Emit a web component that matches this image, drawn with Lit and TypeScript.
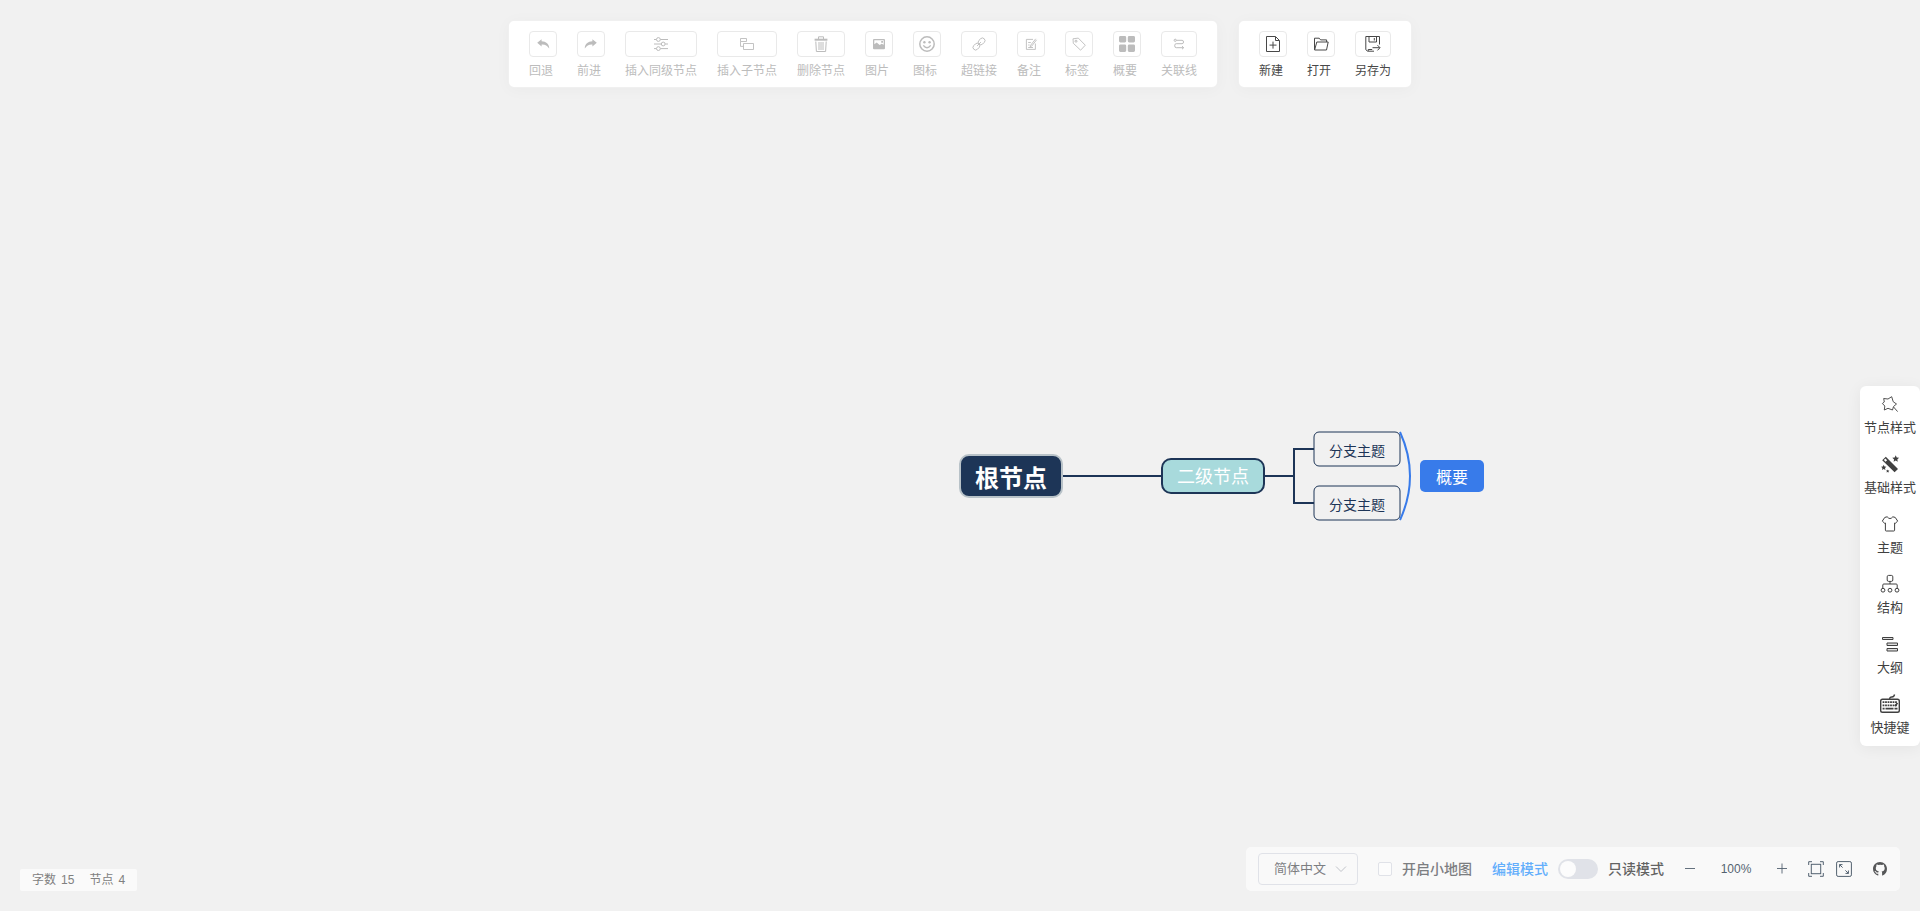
import { LitElement, html, svg, css } from "lit";
import type { TemplateResult, SVGTemplateResult } from "lit";
import { customElement, property, state } from "lit/decorators.js";

const ICONS: Record<string, SVGTemplateResult> = {
  back: svg`<path class="solid" d="M6.6 3.2 2.2 6.8l4.400 3.700V8.400c3.600-.2 5.500.9 7.600 4 .1-4.300-3.200-6.900-7.600-7.100z"/>`,
  forward: svg`<path class="solid" d="M9.400 3.200 13.800 6.800 9.400 10.500V8.400c-3.600-.2-5.500.9-7.600 4-.1-4.300 3.200-6.900 7.600-7.100z"/>`,
  sibling: svg`<path d="M1 3.500h2.400M7.400 3.500H15M1 8h7.200M12.200 8H15M1 12.600h2.400M7.400 12.600H15"/><circle cx="5.400" cy="3.500" r="1.900"/><circle cx="10.200" cy="8" r="1.900"/><circle cx="5.400" cy="12.600" r="1.900"/>`,
  child: svg`<path stroke-width=".9" d="M1.500 2.500h6v3h-6zM4.500 7.500h10v6h-10zM1.500 5.500v4.900h3"/>`,
  trash: svg`<path d="M5.500 3V.8h5V3M2.800 5.500l.6 10h9.200l.6-10M6 6v8M8 6v8M10 6v8"/><path class="solid" d="M1.600 2.700h12.800v2H1.600z"/>`,
  image: svg`<path class="solid" fill-rule="evenodd" d="M3 3h10q1 0 1 1v8.300q0 1-1 1H3q-1 0-1-1V4q0-1 1-1zM3.300 4.200v4l2.400-1.700 3 2.600 2-1.300 2 .9V4.200zM10.200 5h1.800v1.800h-1.800z"/>`,
  smile: svg`<circle cx="8" cy="8" r="7.200" stroke-width="1.500"/><circle class="solid" cx="5.400" cy="6.200" r="1.200"/><circle class="solid" cx="10.600" cy="6.200" r="1.200"/><path stroke-width="1.400" d="M4.300 9.400q3.700 4.600 7.400 0"/>`,
  link: svg`<g transform="rotate(-45 8 8)" stroke-width=".9"><rect x=".6" y="5.400" width="7.400" height="5.200" rx="2.600"/><rect x="8" y="5.400" width="7.400" height="5.200" rx="2.600"/><path d="M5.300 8h5.400"/></g>`,
  note: svg`<path stroke-width=".9" d="M10 3.400H3.400v10h9V7.500M12.700 2.800 7.600 9.300l-.4 1.400 1.400-.5 5-6.400M5.200 6.500h2.600M5.200 9h1.400M5.200 11.500H10"/>`,
  tag: svg`<path stroke-width=".9" d="M2 2.800 2.300 7.300 9.600 14.200 14.300 9.200 7.300 2.100z"/><circle cx="5" cy="5.200" r="1"/>`,
  summary: svg`<path class="solid" d="M1.400 0h4.400q1.400 0 1.400 1.400v3.600q0 1.400-1.400 1.400H1.400Q0 6.400 0 5V1.400Q0 0 1.400 0zM10.200 0h4.400Q16 0 16 1.400V5q0 1.400-1.400 1.400h-4.400Q8.800 6.400 8.800 5V1.400Q8.800 0 10.200 0zM1.400 8.400h4.400q1.400 0 1.400 1.400v4.800q0 1.400-1.400 1.400H1.400Q0 16 0 14.600V9.800q0-1.400 1.400-1.400zM10.200 8.400h4.400q1.400 0 1.400 1.400v4.800q0 1.400-1.400 1.400h-4.400q-1.400 0-1.400-1.400V9.800q0-1.400 1.400-1.400z"/>`,
  relation: svg`<circle cx="4.200" cy="4.300" r="1.100"/><path d="M5.300 4.300h5.800q1.400 0 1.400 1.700T11.100 7.700H5.200q-1.500 0-1.500 2t1.500 2h7.400M11 10.200l1.700 1.500L11 13.200"/>`,
  create: svg`<path d="M1.500.5h9l4 4v11h-13zM10.500.8v3.700h3.700M8 5.600v7M4.500 9.100h7"/>`,
  open: svg`<path d="M1.500 13.800V2.200h4.700l1.400 1.700h6V6M1.600 14 3.800 6h11.400l-1.700 8z"/>`,
  save: svg`<path d="M9 15.200H2.600L.8 13.700V.5h13.700v8M4 .8v5.200h7.500V.8M9.300 2v2.500M7.500 11.700h7.300M12.500 9.200l2.500 2.500-2.500 2.700M3.200 15v-1.500h4"/>`,
  nodeStyle: svg`<path stroke-width=".9" d="M1.700 2.500 6 3 9.700.7l1.500 5L14.500 8l-3 2.500-1 3.500L6 12.300 2.300 14l.5-4L.4 7.500 2.300 6zM11.600 11l4 4.600"/>`,
  baseStyle: svg`<path class="solid" fill-rule="evenodd" d="M.2 4.200 3.800.8 16 13.100 12.600 16.300zM1.900 4.100l1.700 1.600 1.500-1.400-1.700-1.700z"/><path class="solid" d="M13.700-.8l1 2.200 2.400.3-1.800 1.700.5 2.400-2.100-1.200-2.100 1.200.5-2.400-1.800-1.700 2.400-.3zM1.700 8.800l.8 1.700 1.900.2-1.400 1.300.4 1.900-1.700-1-1.700 1 .4-1.900L-1 10.700l1.900-.2zM5.700 13.400l.5 1.100 1.200.1-.9.8.3 1.200-1.100-.6-1.100.6.3-1.200-.9-.8 1.200-.1z"/>`,
  theme: svg`<path d="M5.200.8Q8 4.300 10.800.8L13.200 1.400 15.700 5.100 13.200 7.400 12.600 7V14.200Q12.600 15 11.800 15H4.200Q3.400 15 3.400 14.200V7L2.800 7.400.3 5.100 2.800 1.400z"/>`,
  structure: svg`<rect x="5.200" y="-.6" width="5.600" height="6" rx="1.400"/><path d="M8 5.400v2.600M.8 12V9q0-1 1-1h12.400q1 0 1 1v3"/><circle cx="1" cy="14.200" r="1.900"/><circle cx="8" cy="14.200" r="1.900"/><circle cx="15" cy="14.200" r="1.900"/>`,
  outline: svg`<path fill="#ddd" d="M.5 1.500h10.500v2H.5zM5 7h10.500v2.500H5zM5 12.500h10.500V15H5z"/>`,
  keyboard: svg`<rect x="-1.300" y="3.300" width="18.600" height="12.900" rx="1.800" stroke-width="1.400"/><path stroke-width="1.400" d="M7.700 2.900Q7.700.9 9.800 1T12.600-1.500"/><path stroke-width="1.800" stroke-dasharray="1.800 .7" d="M.6 6.200h15M.6 9.300h15"/><path stroke-width="1.800" d="M.6 12.700h2M3.500 12.700h8M12.500 12.700h3M13 10l2.500-3"/>`,
  minus: svg`<path stroke-width=".9" d="M3 7.500h10"/>`,
  plus: svg`<path stroke-width=".9" d="M3 7.500h10M8 2.500v10"/>`,
  fit: svg`<path d="M.7 4V.7H4M12 .7h3.300V4M15.300 12v3.300H12M4 15.300H.7V12"/><rect x="3.300" y="3.300" width="9.400" height="9.400"/>`,
  full: svg`<rect x=".6" y=".6" width="14.800" height="14.800" rx="1.500"/><path d="M3.600 6.500V3.600h2.900M3.600 3.600l3 3M12.400 9.500v2.900H9.500M12.400 12.400l-3-3"/>`,
  github: svg`<path class="solid" d="M8 1C4.100 1 1 4.100 1 8c0 3.100 2 5.700 4.800 6.600.4.100.5-.2.500-.4v-1.500c-2 .4-2.500-.9-2.700-1.300-.1-.3-.4-.8-.7-1-.3-.1-.7-.5 0-.5s1 .6 1.200.8c.7 1.200 1.800.9 2.200.7.1-.5.300-.9.500-1.100C5.200 10.100 3.800 9.500 3.800 7.200c0-.8.3-1.400.7-1.900-.1-.2-.3-.9.1-1.900 0 0 .6-.2 1.900.7a7 7 0 0 1 3.500 0c1.300-.9 1.900-.7 1.900-.7.4 1 .2 1.700.1 1.900.4.500.7 1.100.7 1.900 0 2.600-1.600 3.100-3.100 3.300.300.200.5.700.5 1.300v2.400c0 .2.100.5.5.4C13.200 13.700 15 11.100 15 8c0-3.900-3.100-7-7-7z"/>`,
};

const icon = (name: string): TemplateResult =>
  html`<svg class="icon" viewBox="0 0 16 16" aria-hidden="true">${ICONS[name]}</svg>`;

const shared = css`
  :host {
    font-family: "Noto Sans CJK SC", sans-serif;
  }
  * {
    box-sizing: border-box;
  }
  button {
    margin: 0;
    padding: 0;
    border: 0;
    background: none;
    font: inherit;
    color: inherit;
    cursor: pointer;
  }
  .icon {
    display: block;
    flex: none;
    width: 16px;
    height: 16px;
    overflow: visible;
    fill: none;
    stroke: currentColor;
  }
  .icon .solid {
    fill: currentColor;
    stroke: none;
  }
`;

interface Tool {
  icon: string;
  label: string;
}

@customElement("tool-group")
class ToolGroup extends LitElement {
  @property({ attribute: false }) tools: Tool[] = [];
  @property({ type: Boolean }) inactive = false;

  static styles = [
    shared,
    css`
      :host {
        display: flex;
        gap: 20px;
        padding: 10px 20px 9px;
        border: 1px solid rgba(0, 0, 0, 0.06);
        border-radius: 6px;
        background: #fff;
        box-shadow: 0 2px 16px rgba(0, 0, 0, 0.03);
        font-size: 12px;
        line-height: 17px;
        color: #484848;
      }
      .tool {
        display: flex;
        flex-direction: column;
        gap: 4px;
        text-align: left;
        white-space: nowrap;
      }
      .tool:disabled {
        color: #bcbcbc;
        cursor: not-allowed;
      }
      .box {
        display: flex;
        align-items: center;
        justify-content: center;
        min-width: 28px;
        height: 26px;
        border: 1px solid #e9e9e9;
        border-radius: 4px;
      }
    `,
  ];

  render() {
    return this.tools.map(
      (t) => html`<button class="tool" ?disabled=${this.inactive}>
        <span class="box">${icon(t.icon)}</span><span>${t.label}</span>
      </button>`
    );
  }
}

@customElement("side-panel")
class SidePanel extends LitElement {
  private items: Tool[] = [
    { icon: "nodeStyle", label: "节点样式" },
    { icon: "baseStyle", label: "基础样式" },
    { icon: "theme", label: "主题" },
    { icon: "structure", label: "结构" },
    { icon: "outline", label: "大纲" },
    { icon: "keyboard", label: "快捷键" },
  ];

  static styles = [
    shared,
    css`
      :host {
        display: flex;
        flex-direction: column;
        width: 60px;
        border-radius: 6px;
        background: #fff;
        box-shadow: 0 2px 16px rgba(0, 0, 0, 0.06);
        font-size: 13px;
        line-height: 18px;
        color: #404040;
      }
      .entry {
        display: flex;
        flex-direction: column;
        align-items: center;
        gap: 6px;
        height: 60px;
        padding-top: 10px;
        white-space: nowrap;
      }
    `,
  ];

  render() {
    return this.items.map(
      (i) => html`<button class="entry">${icon(i.icon)}<span>${i.label}</span></button>`
    );
  }
}

@customElement("mind-canvas")
class MindCanvas extends LitElement {
  static styles = css`
    :host {
      display: block;
      font-family: "Noto Sans CJK SC", sans-serif;
    }
    svg {
      display: block;
      width: 528px;
      height: 96px;
      overflow: visible;
    }
    .line {
      fill: none;
      stroke: #1d3557;
      stroke-width: 2;
    }
    .root {
      fill: #1d3557;
      stroke: #b8c2c8;
      stroke-width: 2;
    }
    .second {
      fill: #a8dadc;
      stroke: #1d3557;
      stroke-width: 2;
    }
    .branch {
      fill: none;
      stroke: #1d3557;
      stroke-width: 1;
    }
    .brace {
      fill: none;
      stroke: #387bea;
      stroke-width: 2;
    }
    .summary {
      fill: #387bea;
    }
    text {
      fill: #fff;
      text-anchor: middle;
    }
    .t-root {
      font-size: 24px;
      font-weight: bold;
    }
    .t-second {
      font-size: 18px;
    }
    .t-branch {
      font-size: 14px;
      fill: #1d3557;
    }
    .t-summary {
      font-size: 16px;
    }
  `;

  render() {
    return html`<svg viewBox="0 0 528 96" role="img" aria-label="根节点">
      <path class="line" d="M102 48H202M304 48H334M354 21H334V75H354" />
      <rect class="root" x="0" y="27" width="102" height="42" rx="9" />
      <rect class="second" x="202" y="31" width="102" height="34" rx="9" />
      <rect class="branch" x="354" y="4" width="86" height="34" rx="5" />
      <rect class="branch" x="354" y="58" width="86" height="34" rx="5" />
      <path class="brace" d="M440 4Q460 48 440 92" />
      <rect class="summary" x="460" y="32" width="64" height="32" rx="5" />
      <text class="t-root" x="51" y="59">根节点</text>
      <text class="t-second" x="253" y="55">二级节点</text>
      <text class="t-branch" x="397" y="28">分支主题</text>
      <text class="t-branch" x="397" y="82">分支主题</text>
      <text class="t-summary" x="492" y="55">概要</text>
    </svg>`;
  }
}

@customElement("nav-bar")
class NavBar extends LitElement {
  @state() private scale = 100;

  static styles = [
    shared,
    css`
      :host {
        display: flex;
        align-items: center;
        height: 44px;
        padding: 0 12px;
        border-radius: 5px;
        background: rgba(255, 255, 255, 0.8);
        opacity: 0.8;
        font-family: "Liberation Sans", "Noto Sans CJK SC", sans-serif;
        font-size: 14px;
        line-height: 20px;
        color: #404040;
        white-space: nowrap;
      }
      .lang {
        display: grid;
        align-items: center;
        width: 100px;
        margin-right: 20px;
      }
      .lang select,
      .lang .icon {
        grid-area: 1 / 1;
      }
      .lang select {
        appearance: none;
        width: 100%;
        height: 32px;
        margin: 0;
        padding: 0 15px;
        border: 1px solid #dcdfe6;
        border-radius: 4px;
        background: transparent;
        font: inherit;
        font-size: 13px;
        color: #606266;
      }
      .lang .icon {
        justify-self: end;
        margin-right: 9px;
        color: #b4b8c0;
        pointer-events: none;
      }
      .map {
        display: flex;
        align-items: center;
        gap: 10px;
        margin-right: 20px;
        font-weight: 500;
        color: #606266;
      }
      .map input {
        appearance: none;
        width: 14px;
        height: 14px;
        margin: 0;
        border: 1px solid #dcdfe6;
        border-radius: 2px;
        background: #fff;
      }
      .mode {
        display: flex;
        align-items: center;
        gap: 10px;
        margin-right: 18px;
        font-weight: 500;
      }
      .mode .current {
        color: #409eff;
      }
      .mode input {
        appearance: none;
        width: 40px;
        height: 20px;
        margin: 0;
        padding: 2px;
        border-radius: 10px;
        background: #dcdfe6;
      }
      .mode input::before {
        content: "";
        display: block;
        width: 16px;
        height: 16px;
        border-radius: 50%;
        background: #fff;
      }
      .zoom {
        display: flex;
        align-items: center;
        margin-right: 18px;
        font-size: 12px;
        color: #2c3e50;
      }
      .zoom output {
        width: 76px;
        text-align: center;
      }
      .view {
        display: flex;
        gap: 12px;
        margin-right: 20px;
        color: #2c3e50;
      }
      .git {
        color: #303133;
      }
    `,
  ];

  render() {
    return html`
      <div class="lang">
        <select aria-label="语言">
          <option>简体中文</option>
        </select>
        <svg class="icon" viewBox="0 0 16 16" aria-hidden="true"><path d="M3 5.500l5 5 5-5" /></svg>
      </div>
      <label class="map"><input type="checkbox" />开启小地图</label>
      <label class="mode">
        <span class="current">编辑模式</span>
        <input type="checkbox" role="switch" />
        <span>只读模式</span>
      </label>
      <div class="zoom">
        <button aria-label="缩小" @click=${() => (this.scale -= 10)}>${icon("minus")}</button>
        <output>${this.scale}%</output>
        <button aria-label="放大" @click=${() => (this.scale += 10)}>${icon("plus")}</button>
      </div>
      <div class="view">
        <button aria-label="适应画布">${icon("fit")}</button>
        <button aria-label="全屏">${icon("full")}</button>
      </div>
      <a class="git" href="#" aria-label="GitHub">${icon("github")}</a>
    `;
  }
}

@customElement("app-root")
class AppRoot extends LitElement {
  private editTools: Tool[] = [
    { icon: "back", label: "回退" },
    { icon: "forward", label: "前进" },
    { icon: "sibling", label: "插入同级节点" },
    { icon: "child", label: "插入子节点" },
    { icon: "trash", label: "删除节点" },
    { icon: "image", label: "图片" },
    { icon: "smile", label: "图标" },
    { icon: "link", label: "超链接" },
    { icon: "note", label: "备注" },
    { icon: "tag", label: "标签" },
    { icon: "summary", label: "概要" },
    { icon: "relation", label: "关联线" },
  ];

  private fileTools: Tool[] = [
    { icon: "create", label: "新建" },
    { icon: "open", label: "打开" },
    { icon: "save", label: "另存为" },
  ];

  static styles = css`
    :host {
      position: relative;
      display: flex;
      flex-direction: column;
      box-sizing: border-box;
      height: 100vh;
      overflow: hidden;
      padding: 20px 0;
      background: #f1f1f1;
      font-family: "Liberation Sans", "Noto Sans CJK SC", sans-serif;
    }
    header {
      display: flex;
      justify-content: center;
      gap: 20px;
    }
    main {
      flex: 1;
      display: flex;
      align-items: center;
      justify-content: flex-end;
      padding-top: 197px;
    }
    mind-canvas {
      position: absolute;
      top: calc(50% - 28px);
      left: 50%;
    }
    footer {
      display: flex;
      align-items: flex-end;
      justify-content: space-between;
      padding: 0 20px;
    }
    .count {
      display: flex;
      gap: 15px;
      padding: 0 12px;
      border-radius: 2px;
      background: rgba(255, 255, 255, 0.64);
      font-size: 12px;
      line-height: 22px;
      color: #808080;
    }
    .stat {
      display: flex;
      gap: 5px;
    }
    nav-bar,
    side-panel,
    .count {
      z-index: 1;
    }
  `;

  render() {
    return html`
      <mind-canvas></mind-canvas>
      <header>
        <tool-group .tools=${this.editTools} inactive></tool-group>
        <tool-group .tools=${this.fileTools}></tool-group>
      </header>
      <main><side-panel></side-panel></main>
      <footer>
        <div class="count">
          <span class="stat"><span>字数</span><span>15</span></span>
          <span class="stat"><span>节点</span><span>4</span></span>
        </div>
        <nav-bar></nav-bar>
      </footer>
    `;
  }
}
